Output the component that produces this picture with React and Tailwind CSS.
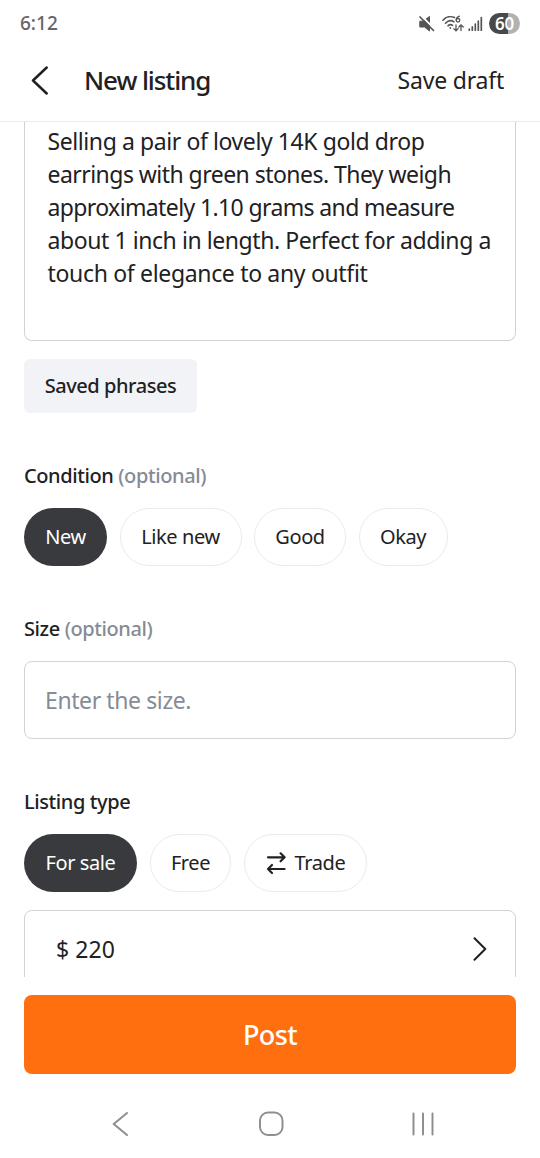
import { useState } from 'react';

const DESCRIPTION = [
  { text: 'Selling a pair of lovely 14K gold drop', spacing: 'tracking-[-0.41px]' },
  { text: 'earrings with green stones. They weigh', spacing: 'tracking-[-0.54px]' },
  { text: 'approximately 1.10 grams and measure', spacing: 'tracking-[-0.62px]' },
  { text: 'about 1 inch in length. Perfect for adding a', spacing: 'tracking-[-0.43px]' },
  { text: 'touch of elegance to any outfit', spacing: 'tracking-[-0.33px]' },
];

const CONDITIONS = [
  { label: 'New', width: 'w-[83px]' },
  { label: 'Like new', width: 'w-[122px]' },
  { label: 'Good', width: 'w-[92px]' },
  { label: 'Okay', width: 'w-[89px]' },
];

const LISTING_TYPES = [
  { label: 'For sale', width: 'w-[113px]' },
  { label: 'Free', width: 'w-[81px]' },
  { label: 'Trade', width: 'w-[123px]', icon: <TradeIcon /> },
];

function TradeIcon() {
  return (
    <svg className="mr-[9px] h-[24px] w-[20px] shrink-0" viewBox="0 0 20 24" fill="none" stroke="currentColor" strokeWidth="2.2" strokeLinecap="round" strokeLinejoin="round">
      <path d="M2 6.3H18.5M14.6 2.3L18.6 6.3L14.6 10.3" />
      <path d="M18.6 18H2M6 14L2 18L6 22" />
    </svg>
  );
}

function StatusBar() {
  return (
    <div className="flex h-[47px] shrink-0 items-center justify-between pl-5 pr-5 text-[#666]">
      <span className="text-[19px] font-medium leading-none">6:12</span>
      <div className="flex items-center">
        {/* Muted */}
        <svg className="h-[18px] w-[18px]" viewBox="0 0 18 18" fill="#555">
          <path d="M1.8 6.2H5L11.5 1.5V16L6.5 12H1.8Z" stroke="#555" strokeLinejoin="round" />
          <path d="M3.5 1L17 14.5" stroke="#fff" strokeWidth="1.8" />
          <path d="M2 2L15.5 15.5" stroke="#555" strokeWidth="1.7" strokeLinecap="round" />
        </svg>
        {/* Wi-Fi 6 */}
        <svg className="ml-[6px] h-[18px] w-[22px]" viewBox="0 0 22 18" fill="none" stroke="#555" strokeWidth="1.6" strokeLinecap="round">
          <path d="M1 5.2C4.2 1.6 9 .9 12.5 2.5" />
          <path d="M3.5 8.2C6 5.6 9.5 5.2 12 6.8" />
          <path d="M6 10.8C7.5 9.4 9.2 9.4 10.6 10.4" />
          <circle cx="8.3" cy="13" r=".9" fill="#555" stroke="none" />
          <path d="M17.4 1.2C15.2 2 14.2 3.7 14.2 5" strokeWidth="1.3" />
          <circle cx="16" cy="5.3" r="1.8" strokeWidth="1.3" />
          <path d="M14 9.8V15.5M11.8 13.6L14 15.8L16.2 13.6M19 15.5V10M16.8 12L19 9.8L21.2 12" strokeWidth="1.3" />
        </svg>
        {/* Signal */}
        <svg className="ml-[4px] h-[16px] w-[15px]" viewBox="0 0 15 16" stroke="#555" strokeWidth="1.7" strokeLinecap="round">
          <path d="M1.3 14.2V13M4.3 14.2V10.8M7.3 14.2V8M10.3 14.2V5M13.3 14.2V1.5" />
        </svg>
        <span className="ml-[6px] flex h-[21px] w-[31px] items-center justify-center rounded-full bg-[linear-gradient(90deg,#494949_60%,#b2b2b2_60%)] text-[17px] font-semibold leading-none tracking-[-0.3px] text-white">
          60
        </span>
      </div>
    </div>
  );
}

function Chip({ label, width, icon, active, onClick }) {
  return (
    <button
      onClick={onClick}
      className={`flex h-[58px] shrink-0 items-center justify-center rounded-full text-[20px] tracking-[-0.4px] ${width} ${
        active ? 'bg-[#393a3e] text-white' : 'border-[1.5px] border-[#e9ebee] bg-white text-[#212124]'
      }`}
    >
      {icon}
      {label}
    </button>
  );
}

function FieldLabel({ children, optional }) {
  return (
    <div className="flex h-[30px] items-center whitespace-pre text-[20px] font-medium tracking-[-0.4px]">
      {children}
      {optional && <span className="text-[#868b94]"> (optional)</span>}
    </div>
  );
}

export default function App() {
  const [condition, setCondition] = useState('New');
  const [listingType, setListingType] = useState('For sale');

  return (
    <div className="flex h-[1158px] w-[540px] flex-col overflow-hidden bg-white font-['Noto_Sans',sans-serif] text-[#212124]">
      <StatusBar />

      {/* Header */}
      <header className="flex h-[75px] shrink-0 items-center border-b border-[#eaebee] pb-[7px] pl-[31px] pr-9">
        <svg className="h-[30px] w-[18px]" viewBox="0 0 18 30" fill="none" stroke="currentColor" strokeWidth="2.5" strokeLinecap="round" strokeLinejoin="round">
          <path d="M15.7 1.5L2 14.5L15.7 27.5" />
        </svg>
        <h1 className="ml-[35px] text-[26px] font-medium tracking-[-1.1px]">New listing</h1>
        <button className="ml-auto text-[23px] tracking-[-0.2px]">Save draft</button>
      </header>

      {/* Form */}
      <main className="h-[855px] shrink-0 overflow-hidden px-6">
        <div className="h-[219px] rounded-b-lg border-[1.5px] border-t-0 border-[#d1d3d8] pl-[22.5px] pt-[3px] text-[23px] leading-[33px]">
          {DESCRIPTION.map((line) => (
            <div key={line.text}>
              <span className={`whitespace-nowrap ${line.spacing}`}>{line.text}</span>
            </div>
          ))}
        </div>

        <button className="mt-[18px] flex h-[54px] w-[173px] items-center justify-center rounded-md bg-[#f2f3f6] text-[20px] font-medium tracking-[-0.45px]">
          Saved phrases
        </button>

        <div className="mt-[48px]">
          <FieldLabel optional>Condition</FieldLabel>
          <div className="mt-[17px] flex gap-[12.5px]">
            {CONDITIONS.map((item) => (
              <Chip key={item.label} {...item} active={condition === item.label} onClick={() => setCondition(item.label)} />
            ))}
          </div>
        </div>

        <div className="mt-[48px]">
          <FieldLabel optional>Size</FieldLabel>
          <input
            className="mt-[17px] block h-[78px] w-full rounded-lg border-[1.5px] border-[#d1d3d8] px-5 text-[23px] tracking-[-0.4px] outline-none placeholder:text-[#868b94]"
            placeholder="Enter the size."
          />
        </div>

        <div className="mt-[48px]">
          <FieldLabel>Listing type</FieldLabel>
          <div className="mt-[17px] flex gap-[13px]">
            {LISTING_TYPES.map((item) => (
              <Chip key={item.label} {...item} active={listingType === item.label} onClick={() => setListingType(item.label)} />
            ))}
          </div>
        </div>

        <div className="mt-[18px] flex h-[78px] items-center justify-between rounded-lg border-[1.5px] border-[#d1d3d8] pl-[31px] pr-[28px] text-[23px] tracking-[0.1px]">
          <span>$ 220</span>
          <svg className="h-[24px] w-[14px]" viewBox="0 0 14 24" fill="none" stroke="currentColor" strokeWidth="2" strokeLinecap="round" strokeLinejoin="round">
            <path d="M1.5 1.3L12.3 12L1.5 22.7" />
          </svg>
        </div>
      </main>

      {/* Submit */}
      <div className="shrink-0 px-6 pt-[18px]">
        <button className="flex h-[79px] w-full items-center justify-center rounded-lg bg-[#ff6f0f] pt-[2px] text-[27px] font-medium tracking-[-0.6px] text-white">
          Post
        </button>
      </div>

      {/* System navigation */}
      <nav className="flex h-[84px] shrink-0 items-center justify-between pl-[112px] pr-[105px] pt-[15px] text-[#8f8f8f]">
        <svg className="h-[26px] w-[18px]" viewBox="0 0 18 26" fill="none" stroke="currentColor" strokeWidth="2" strokeLinecap="round" strokeLinejoin="round">
          <path d="M15 2L1.7 13L15 24" />
        </svg>
        <svg className="h-[26px] w-[26px]" viewBox="0 0 26 26" fill="none" stroke="currentColor" strokeWidth="2">
          <rect x="2" y="1.5" width="22.5" height="22.5" rx="8" />
        </svg>
        <svg className="h-[26px] w-[24px]" viewBox="0 0 24 26" fill="none" stroke="currentColor" strokeWidth="2" strokeLinecap="round">
          <path d="M2.5 2.5V23.5M12 2.5V23.5M21.5 2.5V23.5" />
        </svg>
      </nav>
    </div>
  );
}
